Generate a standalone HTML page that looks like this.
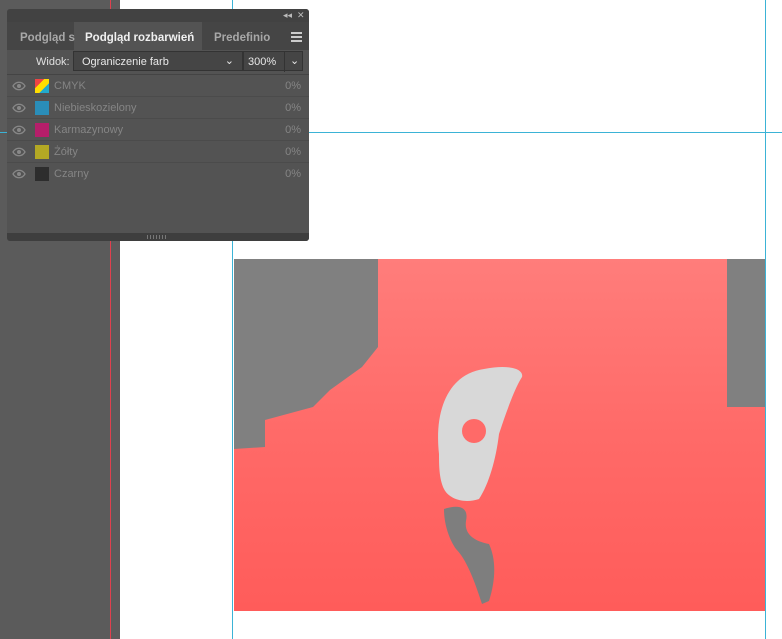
<!DOCTYPE html><html><head><style>
body{margin:0;width:782px;height:639px;position:relative;overflow:hidden;background:#fff;font-family:"Liberation Sans",sans-serif}
.a{position:absolute}
.r{position:relative;height:21px;border-bottom:1px solid #4b4b4b}
</style></head><body>
<div class="a" style="left:0;top:0;width:120px;height:639px;background:#5b5b5b"></div>
<div class="a" style="left:110px;top:0;width:1px;height:639px;background:#e0404e"></div>
<div class="a" style="left:232px;top:0;width:1px;height:639px;background:#3bb3d6"></div>
<div class="a" style="left:765px;top:0;width:1px;height:639px;background:#3bb3d6"></div>
<div class="a" style="left:232px;top:132px;width:550px;height:1px;background:#3bb3d6"></div>
<div class="a" style="left:0;top:132px;width:8px;height:1px;background:#3bb3d6"></div>
<svg class="a" style="left:234px;top:259px" width="531" height="352">
<defs><linearGradient id="g" x1="0" y1="0" x2="0" y2="1"><stop offset="0" stop-color="#ff7d7b"/><stop offset=".5" stop-color="#ff6a68"/><stop offset="1" stop-color="#ff5c5a"/></linearGradient></defs>
<rect width="531" height="352" fill="url(#g)"/>
<polygon points="0,0 144,0 144,88 128,108 96,131 79,148 31,161 31,188 0,190" fill="#808080"/>
<rect x="493" y="0" width="38" height="148" fill="#808080"/>
<path d="M205,195 C200,150 215,115 250,110 C275,105 290,110 288,118 C280,130 270,160 265,175 C262,200 255,225 245,240 C230,245 215,240 210,230 C205,220 205,205 205,195Z" fill="#d8d8d8"/>
<circle cx="240" cy="172" r="12" fill="#ff6a68"/>
<path d="M210,250 C225,245 235,248 232,262 C230,275 240,282 255,285 C262,300 262,320 255,342 L248,345 C240,320 232,300 222,290 C215,280 210,265 210,250Z" fill="#7e7e7e"/>
</svg>
<div class="a" style="left:7px;top:9px;width:302px;height:232px;background:#535353;border-radius:3px;overflow:hidden;font-size:12px">
<div class="a" style="left:0;top:0;width:302px;height:13px;background:#424242"></div>
<div class="a" style="left:276px;top:1px;color:#bbb;font-size:9px">◂◂ &nbsp;✕</div>
<div class="a" style="left:0;top:13px;width:302px;height:28px;background:#454545"></div>
<div class="a" style="left:67px;top:13px;width:128px;height:28px;background:#535353"></div>
<div class="a" style="left:13px;top:23px;color:#a8a8a8;font-weight:bold;font-size:11.5px">Podgląd s</div>
<div class="a" style="left:78px;top:23px;color:#f0f0f0;font-weight:bold;font-size:11.5px">Podgląd rozbarwień</div>
<div class="a" style="left:207px;top:23px;color:#a8a8a8;font-weight:bold;font-size:11.5px">Predefinio</div>
<div class="a" style="left:284px;top:23px;width:11px;height:6px;border-top:2px solid #ccc;border-bottom:2px solid #ccc"></div>
<div class="a" style="left:284px;top:27px;width:11px;height:2px;background:#ccc"></div>
<div class="a" style="left:29px;top:47px;color:#e0e0e0;font-size:11px">Widok:</div>
<div class="a" style="left:66px;top:42px;width:170px;height:20px;background:#454545;border:1px solid #333;box-sizing:border-box;color:#e8e8e8;font-size:11px;padding:4px 0 0 8px">Ograniczenie farb<span style="position:absolute;right:8px;top:2px">⌄</span></div>
<div class="a" style="left:236px;top:42px;width:60px;height:20px;background:#454545;border:1px solid #333;box-sizing:border-box;color:#e8e8e8;font-size:11px;padding:4px 0 0 4px">300%<span style="position:absolute;left:40px;top:0;height:18px;border-left:1px solid #333;padding:2px 0 0 5px">⌄</span></div>
<div class="a" style="left:0;top:65px;width:302px;height:1px;background:#444"></div>
<svg width="0" height="0" style="position:absolute"><defs><g id="eye"><path d="M1,5 C4,0 10,0 13,5 C10,10 4,10 1,5Z" fill="none" stroke="#888" stroke-width="1.3"/><circle cx="7" cy="5" r="2" fill="#888"/></g></defs></svg>
<div style="position:absolute;left:0;top:66px;width:302px;color:#858585;font-size:11px">
<div class="r"><svg class="a" style="left:5px;top:6px" width="14" height="10"><use href="#eye"/></svg><span class="a" style="left:28px;top:4px;width:14px;height:14px;background:linear-gradient(135deg,#e44 0 33%,#fd0 33% 66%,#2ac 66%)"></span><span class="a" style="left:47px;top:5px">CMYK</span><span class="a" style="right:8px;top:5px">0%</span></div>
<div class="r"><svg class="a" style="left:5px;top:6px" width="14" height="10"><use href="#eye"/></svg><span class="a" style="left:28px;top:4px;width:14px;height:14px;background:#2a8db8"></span><span class="a" style="left:47px;top:5px">Niebieskozielony</span><span class="a" style="right:8px;top:5px">0%</span></div>
<div class="r"><svg class="a" style="left:5px;top:6px" width="14" height="10"><use href="#eye"/></svg><span class="a" style="left:28px;top:4px;width:14px;height:14px;background:#b51e6a"></span><span class="a" style="left:47px;top:5px">Karmazynowy</span><span class="a" style="right:8px;top:5px">0%</span></div>
<div class="r"><svg class="a" style="left:5px;top:6px" width="14" height="10"><use href="#eye"/></svg><span class="a" style="left:28px;top:4px;width:14px;height:14px;background:#b3a824"></span><span class="a" style="left:47px;top:5px">Żółty</span><span class="a" style="right:8px;top:5px">0%</span></div>
<div class="r" style="border:none"><svg class="a" style="left:5px;top:6px" width="14" height="10"><use href="#eye"/></svg><span class="a" style="left:28px;top:4px;width:14px;height:14px;background:#2d2d2d"></span><span class="a" style="left:47px;top:5px">Czarny</span><span class="a" style="right:8px;top:5px">0%</span></div>
</div>
<div class="a" style="left:0;top:224px;width:302px;height:8px;background:#3e3e3e"></div>
<div class="a" style="left:140px;top:226px;width:20px;height:4px;background:repeating-linear-gradient(90deg,#777 0 1px,transparent 1px 3px)"></div>
</div>
</body></html>
